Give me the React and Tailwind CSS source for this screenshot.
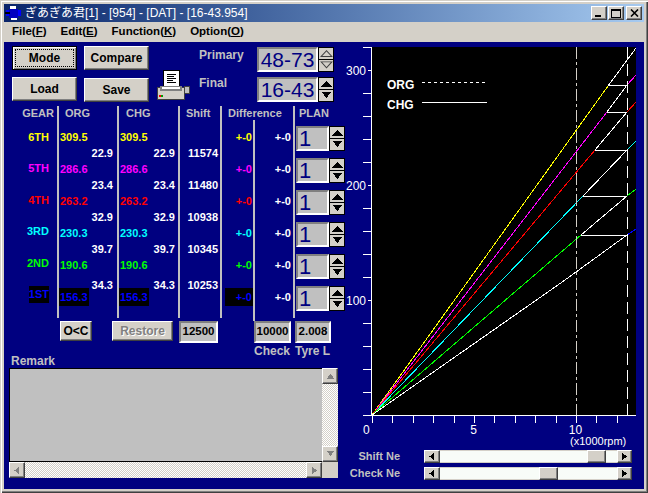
import React from 'react';

var GEARS = [
  { name: '6TH', org: '309.5', gap: '22.9', shift: '11574', text: 'text-[#ffff00]' },
  { name: '5TH', org: '286.6', gap: '23.4', shift: '11480', text: 'text-[#ff00ff]' },
  { name: '4TH', org: '263.2', gap: '32.9', shift: '10938', text: 'text-[#ff0000]' },
  { name: '3RD', org: '230.3', gap: '39.7', shift: '10345', text: 'text-[#00ffff]' },
  { name: '2ND', org: '190.6', gap: '34.3', shift: '10253', text: 'text-[#00ff00]' },
  { name: '1ST', org: '156.3', gap: '', shift: '', text: 'text-[#0000ff]', dark: true },
];

// colour part, white part after the shift point, colour part past the check line
var CHART_LINES = [
  { color: '#ffff00', a: [608, 86], b: [636, 48] },
  { color: '#ff00ff', a: [607, 112], b: [627, 85], c: [636, 75] },
  { color: '#ff0000', a: [595, 150], b: [627, 112], c: [636, 102] },
  { color: '#00ffff', a: [583, 196], b: [627, 150], c: [636, 141] },
  { color: '#00ff00', a: [581, 235], b: [627, 196], c: [636, 189] },
  { color: '#ffffff', a: [565, 280], b: [627, 235], c: [636, 229], end: '#0000ff' },
];

var RAISED = 'border border-t-white border-l-white border-r-[#404040] border-b-[#404040] shadow-[inset_-1px_-1px_0_#808080] bg-[#d4d0c8]';
var SUNKEN = 'border-2 border-t-[#808080] border-l-[#808080] border-r-white border-b-white bg-[#c0c0c0]';
var CHECKER = 'bg-[repeating-conic-gradient(#ffffff_0_25%,#d4d0c8_0_50%)] bg-[length:2px_2px]';

function Arrow({ dir, outline, small }) {
  var paths = {
    up: '1,9 6,2 11,9',
    down: '1,1 6,8 11,1',
    left: '8,1 2,6 8,11',
    right: '3,1 9,6 3,11',
  };
  return (
    <svg viewBox="0 0 12 12" className={small ? 'w-[9px] h-[9px]' : 'w-[13px] h-[10px]'} preserveAspectRatio="none" shapeRendering="crispEdges">
      <polygon points={paths[dir]} fill={outline ? 'none' : (small === 'gray' ? '#808080' : '#000000')} stroke={outline ? '#404040' : 'none'} />
    </svg>
  );
}

function Spin({ outline }) {
  return (
    <div className="flex flex-col w-[16px] h-[25px] bg-black p-[1px] gap-[1px]">
      <div className="flex-1 flex items-center justify-center bg-[#d4d0c8]"><Arrow dir="up" outline={outline} /></div>
      <div className="flex-1 flex items-center justify-center bg-[#d4d0c8]"><Arrow dir="down" outline={outline} /></div>
    </div>
  );
}

function PushButton({ children, className }) {
  return (
    <div className={'flex items-center justify-center text-[12px] font-bold ' + RAISED + ' ' + className}>
      {children}
    </div>
  );
}

function ValueBox({ children, className }) {
  return (
    <div className={'flex items-center justify-center text-[11.5px] font-bold text-black ' + SUNKEN + ' ' + className}>
      {children}
    </div>
  );
}

function Cell({ children, className }) {
  return <div className={'h-[16px] flex items-center text-[11px] font-bold whitespace-nowrap ' + (className || '')}>{children}</div>;
}

function Head({ children, className }) {
  return <div className={'h-[14px] flex items-center text-[11px] font-bold text-[#c0c0c0] whitespace-nowrap ' + (className || '')}>{children}</div>;
}

function RatioColumn({ title, className, pad, gapPad }) {
  return (
    <div className={'flex flex-col border-l-2 border-[#c0c0c0] ' + className}>
      <Head className={pad}>{title}</Head>
      <div className="h-[9px]" />
      {GEARS.map(function(g) {
        return (
          <React.Fragment key={g.name}>
            <Cell className={g.text}>
              <span className={g.dark ? 'bg-black px-[1px] py-[1px]' : 'px-[1px]'}>{g.org}</span>
            </Cell>
            {g.gap && <Cell className={'justify-end text-white ' + gapPad + ' ' + (g.name === '2ND' ? 'pt-[8px]' : '')}>{g.gap}</Cell>}
          </React.Fragment>
        );
      })}
    </div>
  );
}

function Table() {
  return (
    <div className="flex h-[212px] mt-[4px]">
      {/* gear names */}
      <div className="flex flex-col w-[53px]">
        <Head className="justify-end pr-[3px] text-[10.5px]">GEAR</Head>
        <div className="h-[9px]" />
        {GEARS.map(function(g) {
          return (
            <div key={g.name} className="h-[32px]">
              <Cell className={'justify-end pr-[8px] ' + g.text}>
                <span className={g.dark ? 'bg-black' : ''}>{g.name}</span>
              </Cell>
            </div>
          );
        })}
      </div>

      <RatioColumn title="ORG" className="w-[60px]" pad="pl-[6px]" gapPad="pr-[4px]" />
      <RatioColumn title="CHG" className="w-[61px]" pad="pl-[7px]" gapPad="pr-[3px]" />

      <div className="flex flex-col w-[42px] border-l-2 border-[#c0c0c0]">
        <Head className="pl-[6px]">Shift</Head>
        <div className="h-[25px]" />
        {GEARS.map(function(g) {
          if (!g.shift) return null;
          return (
            <div key={g.name} className="h-[32px]">
              <Cell className={'justify-end pr-[2px] text-white ' + (g.name === '2ND' ? 'pt-[8px]' : '')}>{g.shift}</Cell>
            </div>
          );
        })}
      </div>

      {/* difference, two columns under one heading */}
      <div className="flex flex-col w-[73px] border-l-2 border-[#c0c0c0]">
        <Head className="pl-[6px]">Difference</Head>
        <div className="flex flex-1">
          <div className="w-[31px] pt-[9px]">
            {GEARS.map(function(g) {
              return (
                <div key={g.name} className="h-[32px]">
                  <Cell className={'justify-end ' + g.text}>
                    <span className={g.dark ? 'bg-black pl-[11px] pr-[1px] py-[1px]' : 'pr-[1px]'}>+-0</span>
                  </Cell>
                </div>
              );
            })}
          </div>
          <div className="w-[40px] border-l-2 border-[#c0c0c0] pt-[9px]">
            {GEARS.map(function(g) {
              return (
                <div key={g.name} className="h-[32px]">
                  <Cell className="justify-end pr-[2px] text-white">+-0</Cell>
                </div>
              );
            })}
          </div>
        </div>
      </div>

      {/* plan */}
      <div className="flex flex-col w-[52px] border-l-2 border-[#c0c0c0] pl-[1px]">
        <Head className="pl-[3px]">PLAN</Head>
        <div className="flex flex-col gap-[7px] pt-[6px]">
          {GEARS.map(function(g) {
            return (
              <div key={g.name} className="flex">
                <div className={'w-[34px] h-[25px] flex items-center pl-[1px] text-[22px] leading-none text-[#000080] ' + SUNKEN}>1</div>
                <Spin />
              </div>
            );
          })}
        </div>
      </div>
    </div>
  );
}

function PrinterIcon() {
  return (
    <svg width="33" height="30" viewBox="0 0 33 30" shapeRendering="crispEdges" className="mt-[24px] ml-[8px]">
      <rect x="6.5" y="0.5" width="16" height="17" fill="#ffffff" stroke="#000000" />
      <path d="M10 4h9M10 6h7M10 8h9M10 10h6M10 12h9" stroke="#000000" />
      <rect x="0.5" y="17.5" width="27" height="12" fill="#d4d0c8" stroke="#404040" />
      <rect x="3" y="16" width="22" height="5" fill="#808080" />
      <rect x="5" y="17" width="18" height="2" fill="#ffffff" />
      <rect x="27" y="16" width="5" height="7" fill="#c0c0c0" stroke="#404040" />
      <rect x="2" y="25" width="2" height="2" fill="#ff0000" />
      <rect x="4" y="25" width="2" height="2" fill="#00a000" />
    </svg>
  );
}

function TopControls() {
  return (
    <div className="flex pt-[4px] pl-[8px] h-[60px]">
      <div className="flex flex-col gap-[7px] w-[65px]">
        <div className="h-[24px] border border-black bg-[#d4d0c8] p-[2px] shadow-[inset_1px_1px_0_#ffffff,inset_-1px_-1px_0_#808080]">
          <div className="h-full border border-dotted border-black flex items-center justify-center text-[12px] font-bold text-black">Mode</div>
        </div>
        <PushButton className="h-[24px] text-black">Load</PushButton>
      </div>
      <div className="flex flex-col gap-[8px] w-[65px] ml-[7px]">
        <PushButton className="h-[24px] text-black">Compare</PushButton>
        <PushButton className="h-[25px] text-black">Save</PushButton>
      </div>
      <PrinterIcon />
      <div className="flex flex-col w-[58px] ml-[9px] text-[12px] font-bold text-[#c0c0c0]">
        <div className="h-[14px]">Primary</div>
        <div className="mt-[14px] h-[14px]">Final</div>
      </div>
      <div className="flex flex-col gap-[5px] mt-[1px]">
        {['48-73', '16-43'].map(function(v, i) {
          return (
            <div key={v} className="flex">
              <div className={'w-[61px] h-[25px] flex items-center justify-center text-[21px] leading-none text-[#000080] ' + SUNKEN}>{v}</div>
              <Spin outline={i === 0} />
            </div>
          );
        })}
      </div>
    </div>
  );
}

function RemarkBox() {
  return (
    <div className="ml-[5px] w-[329px] flex flex-wrap">
      <div className="w-[313px] h-[94px] bg-[#c0c0c0] border-t border-l border-b border-black" />
      <div className={'w-[16px] h-[94px] flex flex-col justify-between ' + CHECKER}>
        <div className={'h-[16px] flex items-center justify-center ' + RAISED}><Arrow dir="up" small="gray" /></div>
        <div className={'h-[16px] flex items-center justify-center ' + RAISED}><Arrow dir="down" small="gray" /></div>
      </div>
      <div className={'w-[313px] h-[16px] flex justify-between ' + CHECKER}>
        <div className={'w-[16px] flex items-center justify-center ' + RAISED}><Arrow dir="left" small="gray" /></div>
        <div className={'w-[16px] flex items-center justify-center ' + RAISED}><Arrow dir="right" small="gray" /></div>
      </div>
      <div className="w-[16px] h-[16px] bg-[#d4d0c8]" />
    </div>
  );
}

function LeftPanel() {
  return (
    <div className="w-[341px] shrink-0 flex flex-col">
      <TopControls />
      <Table />
      <div className="flex h-[24px] pt-[3px]">
        <PushButton className="w-[32px] h-[20px] ml-[56px] text-black">O&lt;C</PushButton>
        <PushButton className="w-[61px] h-[20px] ml-[20px] text-[#808080] [text-shadow:1px_1px_0_#ffffff]">Restore</PushButton>
        <ValueBox className="w-[39px] h-[22px] ml-[6px]">12500</ValueBox>
        <ValueBox className="w-[37px] h-[22px] ml-[36px]">10000</ValueBox>
        <ValueBox className="w-[36px] h-[22px] ml-[4px]">2.008</ValueBox>
      </div>
      <div className="flex h-[26px] text-[12px] font-bold text-[#c0c0c0]">
        <div className="ml-[7px] mt-[10px] w-[243px]">Remark</div>
        <div className="w-[41px]">Check</div>
        <div className="whitespace-nowrap">Tyre L</div>
      </div>
      <RemarkBox />
    </div>
  );
}

function Chart() {
  var yTicks = Array.from({ length: 17 }, function(_, i) { return 415 - i * 23; });
  var xTicks = Array.from({ length: 13 }, function(_, i) { return 372 + i * 20.4; });
  return (
    <svg width="299" height="405" viewBox="345 42 299 405" className="block">
      <rect x="372" y="47" width="264" height="368" fill="#000000" />
      <g shapeRendering="crispEdges">
        {CHART_LINES.map(function(l, i) {
          return (
            <g key={i}>
              <line x1="372" y1="415" x2={l.a[0]} y2={l.a[1]} stroke={l.color} />
              <line x1={l.a[0]} y1={l.a[1]} x2={l.b[0]} y2={l.b[1]} stroke="#ffffff" />
              {l.c && <line x1={l.b[0]} y1={l.b[1]} x2={l.c[0]} y2={l.c[1]} stroke={l.end || l.color} />}
            </g>
          );
        })}
        <path d="M608 85.5H627M607 112.5H627M595 150.5H627M583 196.5H627M581 235.5H627" stroke="#ffffff" />
        <line x1="576.5" y1="47" x2="576.5" y2="415" stroke="#d4d0c8" strokeDasharray="12 3 3 3" />
        <line x1="627.5" y1="47" x2="627.5" y2="415" stroke="#ffffff" strokeDasharray="12 5" />
        <path d="M422 82.5H485" stroke="#ffffff" strokeDasharray="3 3" />
        <path d="M422 102.5H487" stroke="#ffffff" />
        <path d="M371.5 47V415M363 415.5H636" stroke="#ffffff" />
        {yTicks.map(function(y, i) {
          // the ticks beside a number are short
          return <path key={y} d={'M' + (i % 5 === 0 && i > 0 ? 368 : 363) + ' ' + (y + 0.5) + 'H371'} stroke="#ffffff" />;
        })}
        {xTicks.map(function(x) { return <path key={x} d={'M' + (Math.round(x) + 0.5) + ' 415V423'} stroke="#ffffff" />; })}
      </g>
      <g fill="#ffffff" fontSize="12" fontFamily="'Liberation Sans', sans-serif">
        <text x="366" y="75" textAnchor="end">300</text>
        <text x="366" y="190" textAnchor="end">200</text>
        <text x="366" y="305" textAnchor="end">100</text>
        <text x="363" y="434">0</text>
        <text x="473.5" y="434" textAnchor="middle">5</text>
        <text x="575.5" y="434" textAnchor="middle">10</text>
        <text x="570" y="445" fontSize="11">(x1000rpm)</text>
        <text x="387" y="89" fontWeight="bold" fontSize="12">ORG</text>
        <text x="387" y="109" fontWeight="bold" fontSize="12">CHG</text>
      </g>
    </svg>
  );
}

function Slider({ label, before }) {
  return (
    <div className="flex items-center h-[13px]">
      <div className="w-[55px] text-right text-[11px] font-bold text-[#c0c0c0] whitespace-nowrap">{label}</div>
      <div className="ml-[24px] w-[208px] h-[13px] flex bg-[#f8fcf8]">
        <div className={'w-[16px] flex items-center justify-center ' + RAISED}><Arrow dir="left" small="black" /></div>
        <div className="bg-[#f8fcf8] border-y border-[#d4d0c8]" style={{ width: before }} />
        <div className={'w-[19px] ' + RAISED} />
        <div className="flex-1 border-y border-[#d4d0c8]" />
        <div className={'w-[15px] flex items-center justify-center ' + RAISED}><Arrow dir="right" small="black" /></div>
      </div>
    </div>
  );
}

function WindowButton({ children, className }) {
  return <div className={'w-[16px] h-[14px] flex items-center justify-center ' + RAISED + ' ' + (className || '')}>{children}</div>;
}

function TitleBar() {
  return (
    <div className="h-[18px] flex items-center bg-gradient-to-r from-[#0a246a] to-[#a6caf0] text-white">
      <svg width="18" height="16" viewBox="0 0 18 16" shapeRendering="crispEdges" className="ml-[1px]">
        <rect x="5" y="1" width="6" height="3" fill="#ffffff" />
        <rect x="1" y="5" width="15" height="6" fill="#0000ff" />
        <rect x="4" y="4" width="9" height="9" fill="#0000c0" />
        <rect x="0" y="7" width="5" height="2" fill="#000000" />
        <rect x="6" y="13" width="6" height="2" fill="#ffffff" />
      </svg>
      <div className="ml-[2px] text-[12px] whitespace-nowrap font-['Liberation_Sans','Noto_Sans_CJK_JP',sans-serif]">
        ぎあぎあ君[1] - [954] - [DAT] - [16-43.954]
      </div>
      <div className="ml-auto flex mr-[2px]">
        <WindowButton>
          <svg width="8" height="8" viewBox="0 0 8 8" shapeRendering="crispEdges"><rect x="0" y="6" width="6" height="2" fill="#000000" /></svg>
        </WindowButton>
        <WindowButton className="ml-[1px]">
          <svg width="10" height="9" viewBox="0 0 10 9" shapeRendering="crispEdges"><rect x="0.5" y="1.5" width="9" height="7" fill="none" stroke="#000000" /><rect x="0" y="0" width="10" height="2" fill="#000000" /></svg>
        </WindowButton>
        <WindowButton className="ml-[2px]">
          <svg width="9" height="8" viewBox="0 0 9 8"><path d="M1 0.5L8 7.5M8 0.5L1 7.5" stroke="#000000" strokeWidth="1.6" /></svg>
        </WindowButton>
      </div>
    </div>
  );
}

function MenuBar() {
  var items = [
    { label: 'File(', key: 'F' },
    { label: 'Edit(', key: 'E' },
    { label: 'Function(', key: 'K' },
    { label: 'Option(', key: 'O' },
  ];
  return (
    <div className="h-[20px] flex items-center pl-[8px] gap-[14px] text-[11.5px] font-bold text-black bg-[#d4d0c8]">
      {items.map(function(m) {
        return <span key={m.key}>{m.label}<span className="underline">{m.key}</span>)</span>;
      })}
    </div>
  );
}

export default function App() {
  return (
    <div className="w-[648px] h-[493px] overflow-hidden bg-[#d4d0c8] p-[4px] font-['Liberation_Sans',sans-serif] shadow-[inset_1px_1px_0_#d4d0c8,inset_2px_2px_0_#ffffff,inset_-1px_-1px_0_#404040,inset_-2px_-2px_0_#808080]">
      <TitleBar />
      <MenuBar />
      <div className="flex h-[447px] bg-[#000080]">
        <LeftPanel />
        <div className="flex flex-col">
          <Chart />
          <div className="flex flex-col gap-[4px] pt-[3px]">
            <Slider label="Shift Ne" before={147} />
            <Slider label="Check Ne" before={99} />
          </div>
        </div>
      </div>
    </div>
  );
}
